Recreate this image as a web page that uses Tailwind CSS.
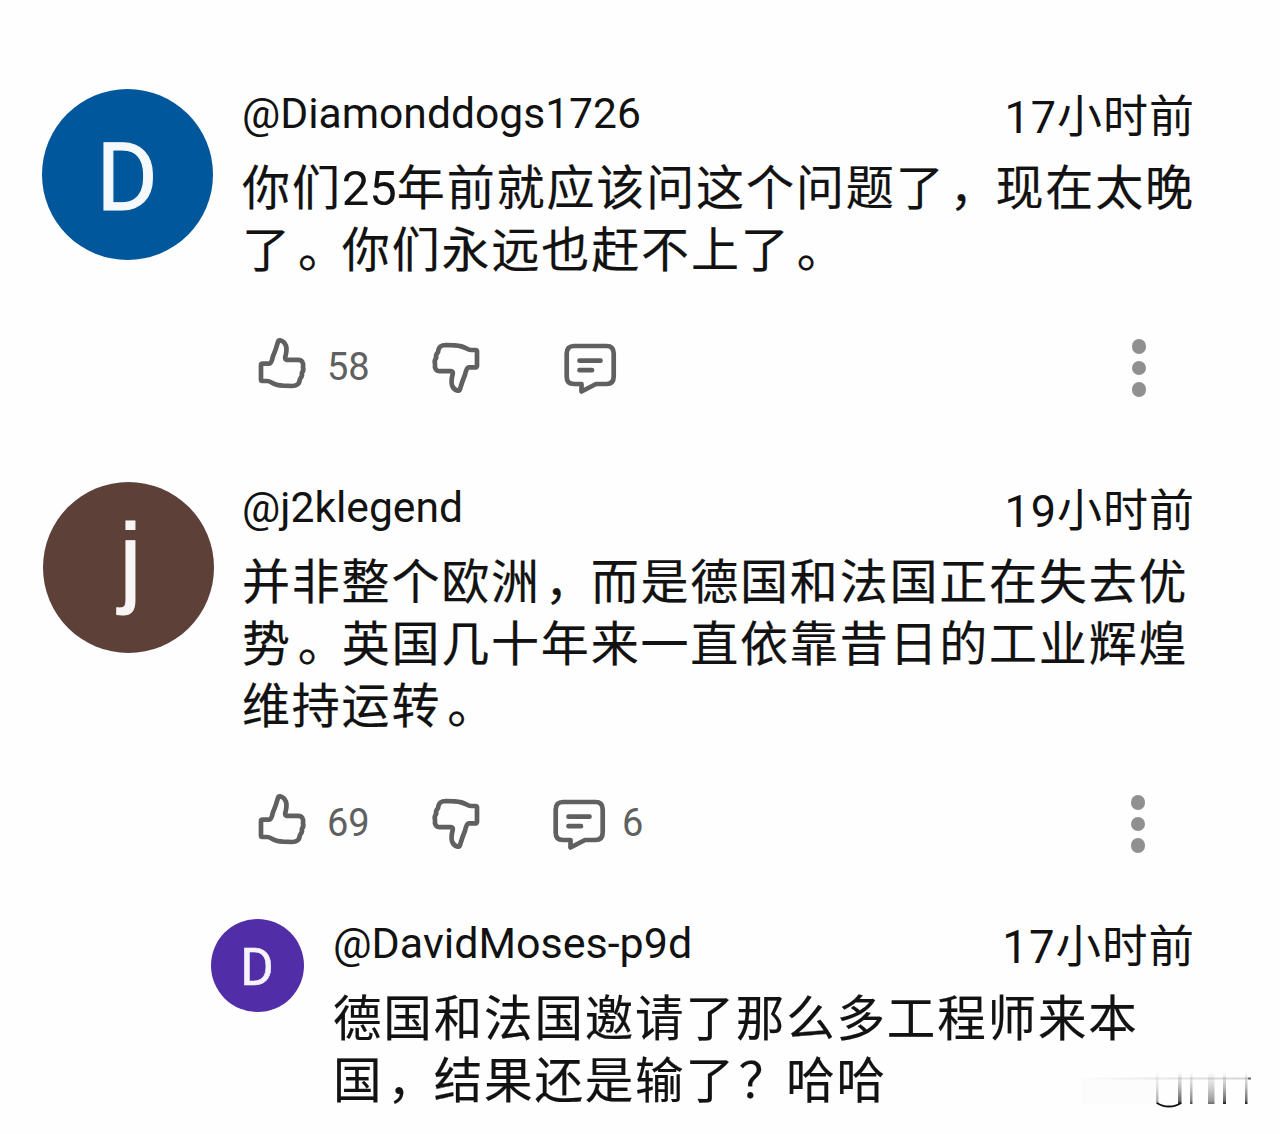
<!DOCTYPE html>
<html lang="zh-CN">
<head>
    <meta charset="UTF-8" />
    <meta name="viewport" content="width=device-width, initial-scale=1" />
    <title>评论</title>
    <script src="https://cdn.jsdelivr.net/npm/@tailwindcss/browser@4"></script>
</head>
<body class="bg-[#fefefe] text-[#121212] font-['Roboto','Noto_Sans_CJK_SC',sans-serif] overflow-hidden">
    <!-- Icônes partagées -->
    <svg class="hidden">
        <symbol id="like" viewBox="0 0 57 54">
            <path d="M7 29.500V43.500q0 1.500 1.500 1.500H13q2 0 5 1.700 4 2.500 11 3l9 .3q7 0 7.700-5.500 0-1.500.8-2.300 2-2 1.300-5.200 2.200-2.500 1.200-5.700 1-7.300-5-7.500H33q-2.200 0-1.800-2.500 2-7.500.8-11.500-1.500-4.500-6-5.500-1.500-.2-2 1.500-2.200 8-5 14.500-1.500 7.400-4 7.400H8.500q-1.500 0-1.500 1.800Z" />
        </symbol>
        <symbol id="reply" viewBox="0 0 56 54">
            <path d="M12 5h32.500q7.200 0 7.200 7.500v23q0 7.500-7.200 7.500H34L19.500 50.500V43H12q-7.300 0-7.300-7.500v-23Q4.700 5 12 5Z" />
            <path d="M17.500 19.700h21M17.500 29.200h12.500" />
        </symbol>
    </svg>

    <main class="relative w-[1280px] h-[1134px] overflow-hidden pt-[88px] pl-[42px]">
        <!-- Commentaire 1 -->
        <article class="flex h-[394px]">
            <div class="w-[171px] h-[171px] mt-px mr-[29px] shrink-0 rounded-full bg-[#01579b] text-[#f6f9fc] flex items-center justify-center text-[94px] leading-none [-webkit-text-stroke:1px]"><span class="pt-[6px] pr-px">D</span></div>
            <div class="w-[953px]">
                <header class="flex justify-between h-[70px]">
                    <span class="text-[42.600px] leading-[50px]">@Diamonddogs1726</span>
                    <time class="text-[45px] leading-[59px] tracking-[1px] whitespace-nowrap">17小时前</time>
                </header>
                <p class="text-[48px] tracking-[1.880px] leading-[62px] whitespace-nowrap [-webkit-text-stroke:0.2px]">你们<span class="text-[49px] tracking-normal [-webkit-text-stroke:0]">25</span>年前就应该问这个问题了<span class="pl-[4px] tracking-[-2.120px]">，</span>现在太晚<br>了<span class="pl-[6px] tracking-[-4.120px]">。</span>你们永远也赶不上了<span class="pl-[6px]">。</span></p>
                <div class="flex items-start h-[62px] mt-[54px] text-[#606060]">
                    <svg class="w-[57px] h-[54px] ml-[12px] fill-none stroke-current stroke-[4.700] [stroke-linejoin:round]"><use href="#like" /></svg>
                    <span class="w-[116px] pl-[16px] text-[38px] leading-[62px]">58</span>
                    <svg class="w-[57px] h-[54px] mt-[5px] rotate-180 fill-none stroke-current stroke-[4.700] [stroke-linejoin:round]"><use href="#like" /></svg>
                    <svg class="w-[56px] h-[54px] ml-[78px] mt-[5px] fill-none stroke-current stroke-[4.700] [stroke-linecap:round] [stroke-linejoin:round]"><use href="#reply" /></svg>
                    <div class="ml-auto mr-[49px] mt-[3px] flex flex-col gap-[7px]">
                        <i class="size-[14.500px] rounded-full bg-[#909090]"></i>
                        <i class="size-[14.500px] rounded-full bg-[#909090]"></i>
                        <i class="size-[14.500px] rounded-full bg-[#909090]"></i>
                    </div>
                </div>
            </div>
        </article>

        <!-- Commentaire 2 -->
        <article class="flex h-[436px]">
            <div class="w-[171px] h-[171px] ml-px mr-[28px] shrink-0 rounded-full bg-[#5d4037] text-[#f8f6f5] flex items-center justify-center text-[101px] leading-none font-['Liberation_Sans'] [-webkit-text-stroke:1px]"><span class="pb-[16px] pl-[4px]">j</span></div>
            <div class="w-[953px]">
                <header class="flex justify-between h-[70px]">
                    <span class="text-[42.600px] leading-[50px]">@j2klegend</span>
                    <time class="text-[45px] leading-[59px] tracking-[1px] whitespace-nowrap">19小时前</time>
                </header>
                <p class="text-[48px] tracking-[1.800px] leading-[62px] whitespace-nowrap [-webkit-text-stroke:0.2px]">并非整个欧洲<span class="pl-[4px] tracking-[-2.200px]">，</span>而是德国和法国正在失去优<br>势<span class="pl-[6px] tracking-[-4.200px]">。</span>英国几十年来一直依靠昔日的工业辉煌<br>维持运转<span class="pl-[6px]">。</span></p>
                <div class="flex items-start h-[62px] mt-[54px] text-[#606060]">
                    <svg class="w-[57px] h-[54px] ml-[12px] fill-none stroke-current stroke-[4.700] [stroke-linejoin:round]"><use href="#like" /></svg>
                    <span class="w-[116px] pl-[16px] text-[38px] leading-[62px]">69</span>
                    <svg class="w-[57px] h-[54px] mt-[5px] rotate-180 fill-none stroke-current stroke-[4.700] [stroke-linejoin:round]"><use href="#like" /></svg>
                    <svg class="w-[56px] h-[54px] ml-[67px] mt-[5px] fill-none stroke-current stroke-[4.700] [stroke-linecap:round] [stroke-linejoin:round]"><use href="#reply" /></svg>
                    <span class="pl-[15px] text-[38px] leading-[62px]">6</span>
                    <div class="ml-auto mr-[50px] mt-[3px] flex flex-col gap-[7px]">
                        <i class="size-[14.500px] rounded-full bg-[#909090]"></i>
                        <i class="size-[14.500px] rounded-full bg-[#909090]"></i>
                        <i class="size-[14.500px] rounded-full bg-[#909090]"></i>
                    </div>
                </div>
            </div>
        </article>

        <!-- Réponse -->
        <article class="flex pl-[169px]">
            <div class="w-[93px] h-[93px] mt-px mr-[29px] shrink-0 rounded-full bg-[#512da8] text-[#f6f3fb] flex items-center justify-center text-[51px] leading-none [-webkit-text-stroke:0.6px]"><span class="pt-[3px] pr-px">D</span></div>
            <div class="w-[862px]">
                <header class="flex justify-between h-[71px]">
                    <span class="text-[43px] leading-[50px]">@DavidMoses-p9d</span>
                    <time class="text-[45.500px] leading-[60px] tracking-[1px] whitespace-nowrap">17小时前</time>
                </header>
                <p class="text-[48.500px] tracking-[1.850px] leading-[62px] whitespace-nowrap [-webkit-text-stroke:0.2px]">德国和法国邀请了那么多工程师来本<br>国<span class="pl-[4px] tracking-[-2.150px]">，</span>结果还是输了<span class="pl-[3px] tracking-[-1.150px]">？</span>哈哈</p>
            </div>
        </article>

        <!-- Filigrane estompé -->
        <svg class="absolute left-[1076px] top-[1064px] w-[180px] h-[50px]" viewBox="0 0 180 50">
            <defs>
                <linearGradient id="fade" x1="0" y1="0" x2="0" y2="1">
                    <stop offset="0" stop-color="#000" stop-opacity="0" />
                    <stop offset=".5" stop-color="#000" stop-opacity=".28" />
                    <stop offset=".9" stop-color="#000" stop-opacity=".6" />
                    <stop offset="1" stop-color="#000" stop-opacity=".9" />
                </linearGradient>
                <linearGradient id="line">
                    <stop offset="0" stop-color="#000" stop-opacity="0" />
                    <stop offset="1" stop-color="#000" stop-opacity=".17" />
                </linearGradient>
            </defs>
            <path d="M5 14h75v26H5z" fill="#000" fill-opacity=".008" />
            <path d="M5 13.500h170v2H5z" fill="url(#line)" />
            <path d="M172 13.500h3v2h-3z" fill="#000" fill-opacity=".5" />
            <g fill="url(#fade)">
                <path d="M80 8h2.500v32H80z" opacity=".5" />
                <path d="M102 8h3.500v32H102z" />
                <path d="M114 8h2.500v32H114z" opacity=".8" />
                <path d="M132 8h6.500v32H132z" opacity=".65" />
                <path d="M147 8h3v32h-3z" />
                <path d="M169 8h2.500v32H169z" />
            </g>
            <path d="M81 39q5 3.500 12 3.500T105 39" fill="none" stroke="#111" stroke-width="1.800" />
        </svg>
    </main>
</body>
</html>
